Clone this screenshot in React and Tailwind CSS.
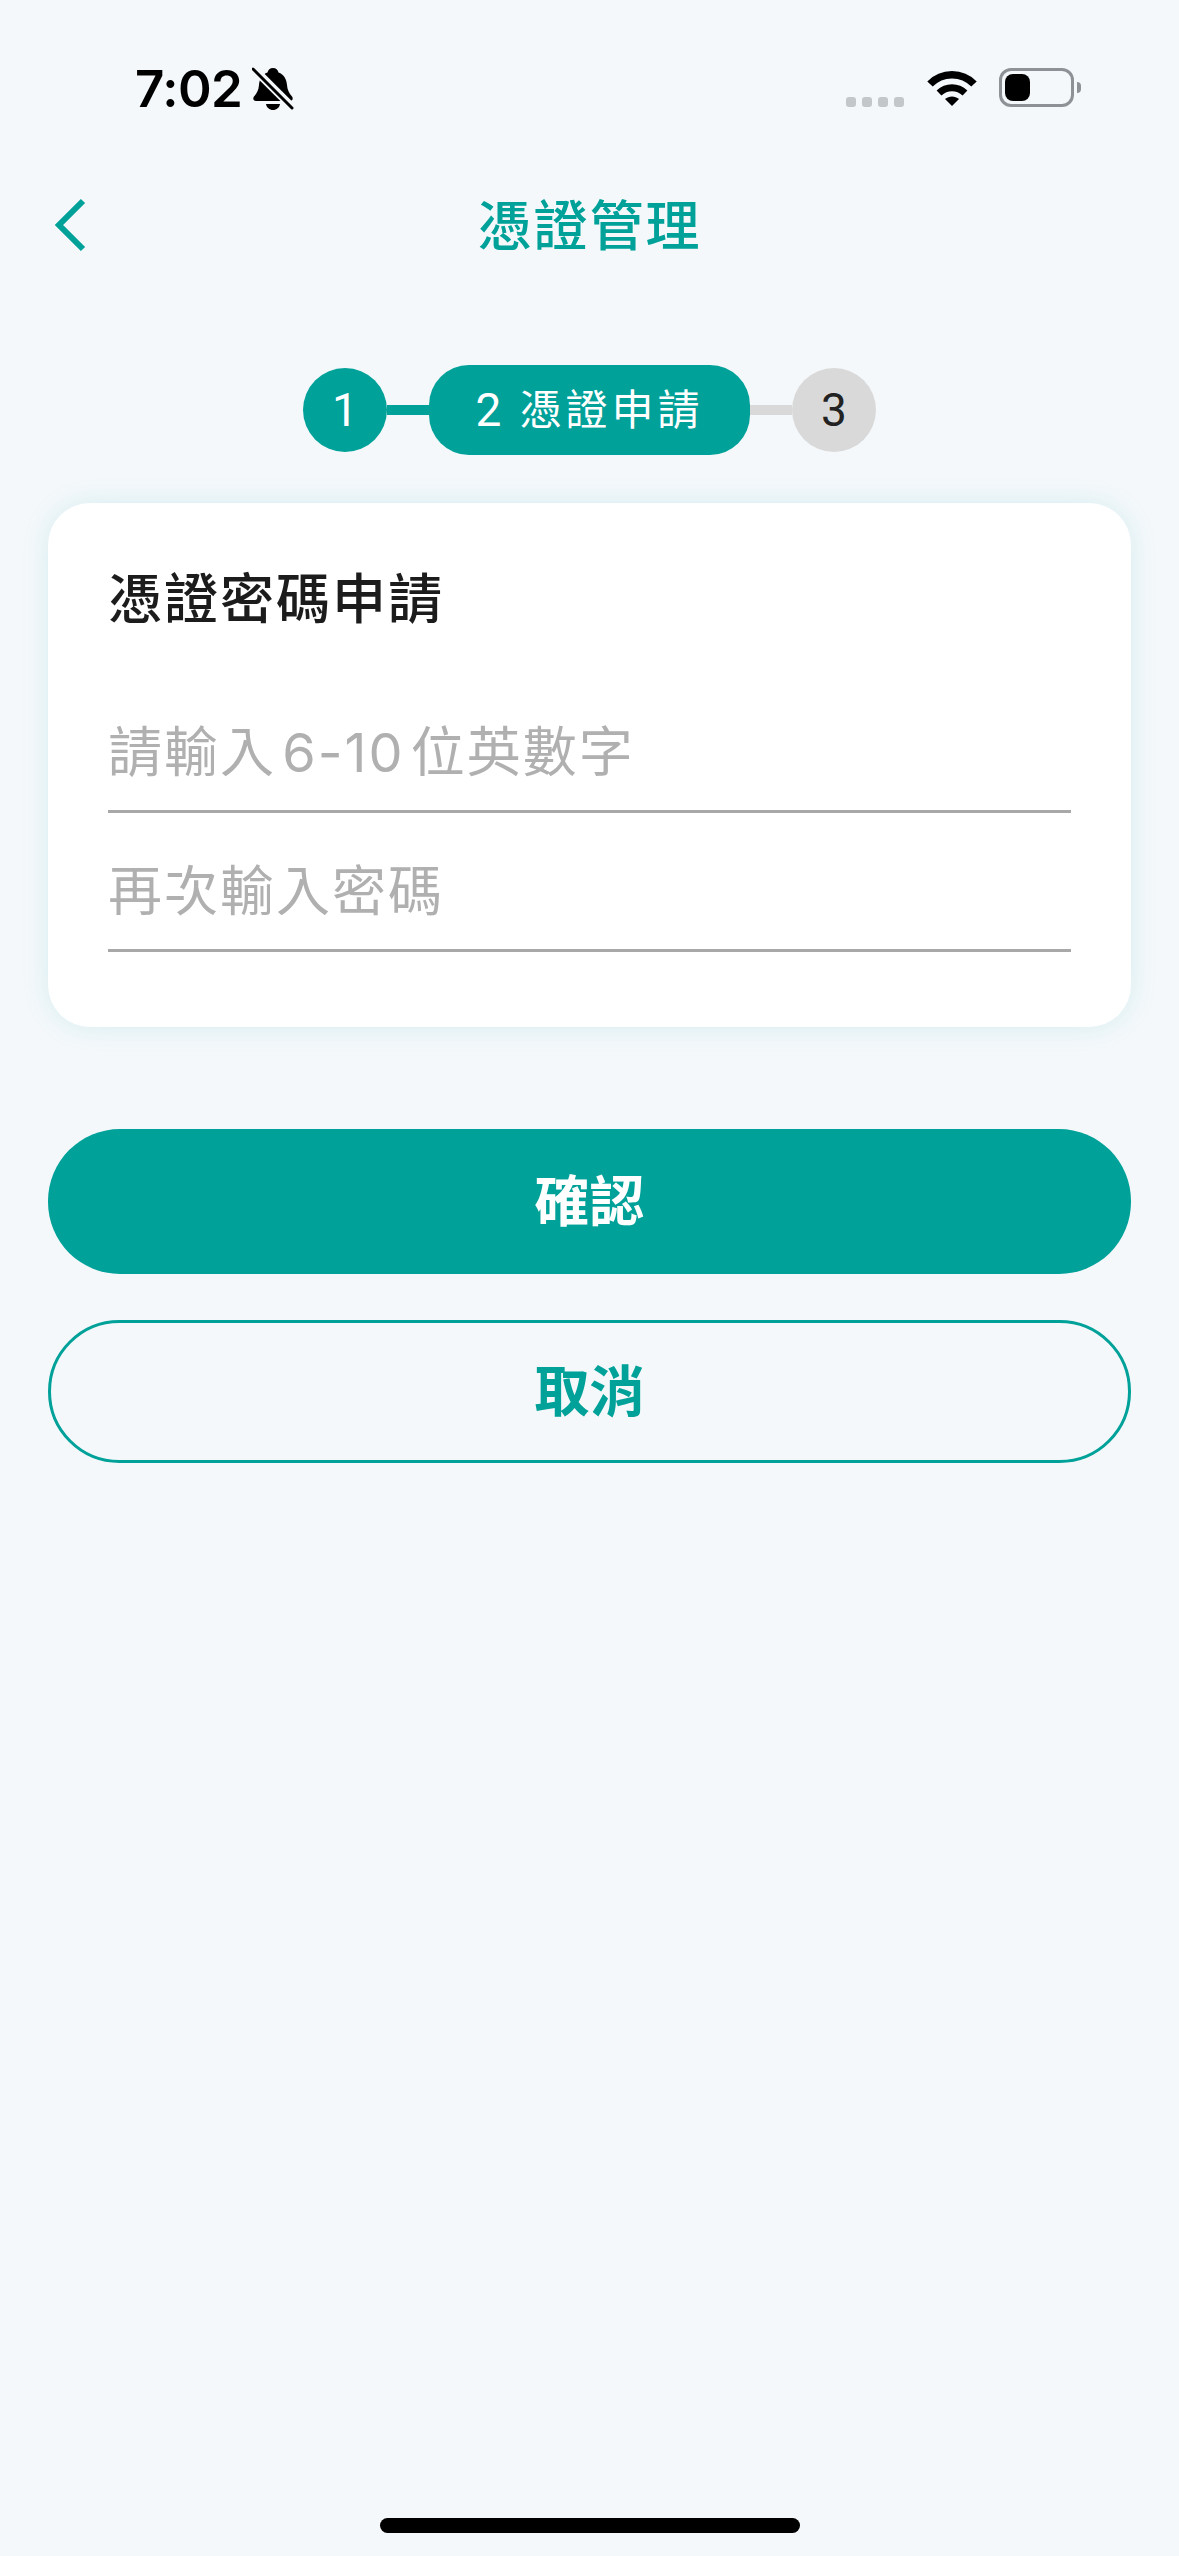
const cjk = "font-['Inter','Noto_Sans_CJK_TC','Noto_Sans_CJK_JP',sans-serif]";

function BellOff() {
  return (
    <svg width="42" height="44" viewBox="0 0 42 44" className="block">
      <path
        d="M21 1c3 0 5 2 5.500 4.500C32 7.500 34.500 12 35 18c.4 5 2 8 5 11.500 1.500 2 .5 4.500-2 4.500H4c-2.500 0-3.500-2.500-2-4.500C5 26 6.600 23 7 18c.5-6 3-10.500 8.500-12.500C16 3 18 1 21 1z"
        fill="#000"
      />
      <path d="M14 37h14c-.5 3.500-3.500 6-7 6s-6.500-2.500-7-6z" fill="#000" />
      <path d="M2 2l38 38" stroke="#f4f8fb" strokeWidth="8" />
      <path d="M1 2l39 39" stroke="#000" strokeWidth="3" strokeLinecap="round" />
    </svg>
  );
}

function Wifi() {
  return (
    <svg width="50" height="37" viewBox="0 0 50 37" className="block">
      <path d="M3 15C15 2.500 35 2.500 47 15" fill="none" stroke="#000" strokeWidth="7.500" />
      <path d="M12 24c7.500-7 18.500-7 26 0" fill="none" stroke="#000" strokeWidth="7" />
      <path d="M18 30c4-3.500 10-3.500 14 0l-7 7z" fill="#000" />
    </svg>
  );
}

function StatusBar() {
  return (
    <div className="flex h-[176px] items-start justify-between pl-[135px] pr-[98px] pt-[67px]">
      <div className="flex items-center gap-[10px]">
        <span className="font-['Inter',sans-serif] text-[51px] leading-[44px] font-semibold tracking-[-0.5px] text-black">
          7:02
        </span>
        <BellOff />
      </div>
      <div className="flex items-start">
        <div className="mt-[30px] flex gap-[6px]">
          <span className="h-[10px] w-[10px] rounded-[3px] bg-[#c4c7ca]" />
          <span className="h-[10px] w-[10px] rounded-[3px] bg-[#c4c7ca]" />
          <span className="h-[10px] w-[10px] rounded-[3px] bg-[#c4c7ca]" />
          <span className="h-[10px] w-[10px] rounded-[3px] bg-[#c4c7ca]" />
        </div>
        <div className="ml-[23px] mt-[2px]">
          <Wifi />
        </div>
        <div className="ml-[22px] mt-[1px] flex items-center">
          <div className="h-[39px] w-[75px] rounded-[12px] border-[3px] border-[#8e9296] p-[3px]">
            <div className="h-full w-[25px] rounded-[8px] bg-black" />
          </div>
          <span className="ml-[3px] h-[11px] w-[4px] rounded-r-full bg-[#8e9296]" />
        </div>
      </div>
    </div>
  );
}

function Stepper() {
  return (
    <div className="mt-[93px] flex h-[90px] items-center justify-center font-['Roboto','Noto_Sans_CJK_TC',sans-serif]">
      <div className="flex h-[84px] w-[84px] items-center justify-center rounded-full bg-[#00a199] text-[46px] text-white">
        1
      </div>
      <div className="h-[10px] w-[42px] bg-[#00a199]" />
      <div className="flex h-[90px] w-[321px] items-center justify-center rounded-[40px] bg-[#00a199] text-[42px] tracking-[4px] text-white">
        <span className="mr-[18px] text-[46px] tracking-normal">2</span>
        憑證申請
      </div>
      <div className="h-[10px] w-[42px] bg-[#d9d9d9]" />
      <div className="flex h-[84px] w-[84px] items-center justify-center rounded-full bg-[#d9d9d9] text-[46px] text-[#222]">
        3
      </div>
    </div>
  );
}

function Field({ placeholder }) {
  return (
    <div className="flex h-[139px] items-end border-b-[3px] border-[#a8a8a8] pb-[25px]">
      <span className="text-[54px] leading-[64px] tracking-[2px] text-[#b0b0b0] [word-spacing:-11px]">
        {placeholder}
      </span>
    </div>
  );
}

export default function App() {
  return (
    <div className={`flex h-[2556px] flex-col bg-[#f4f8fb] ${cjk}`}>
      <StatusBar />

      {/* Header */}
      <div className="relative flex h-[96px] items-center justify-center">
        <button className="absolute left-[54px] top-[22px]">
          <svg width="32" height="54" viewBox="0 0 32 54" className="block">
            <path d="M29 3L5 27l24 24" fill="none" stroke="#00a199" strokeWidth="6" />
          </svg>
        </button>
        <h1 className="pt-[5px] text-[54px] leading-[64px] font-medium tracking-[2px] text-[#00a199]">憑證管理</h1>
      </div>

      <Stepper />

      {/* Card */}
      <div className="mx-[48px] mt-[48px] h-[524px] rounded-[42px] bg-white px-[60px] pt-[65px] shadow-[0_0_28px_rgba(0,161,153,0.12)]">
        <h2 className="mb-[42px] text-[54px] leading-[64px] font-medium tracking-[2px] text-[#1c1c1c]">憑證密碼申請</h2>
        <Field placeholder="請輸入 6-10 位英數字" />
        <Field placeholder="再次輸入密碼" />
      </div>

      {/* Buttons */}
      <div className="mx-[48px] mt-[102px] flex flex-col gap-[46px]">
        <button className="h-[145px] rounded-[72px] bg-[#00a199] text-[55px] font-bold text-white">確認</button>
        <button className="h-[143px] rounded-[72px] border-[3px] border-[#00a199] text-[55px] font-bold text-[#00a199]">
          取消
        </button>
      </div>

      {/* Home indicator */}
      <div className="mt-auto mb-[23px] flex justify-center">
        <div className="h-[15px] w-[420px] rounded-full bg-black" />
      </div>
    </div>
  );
}
